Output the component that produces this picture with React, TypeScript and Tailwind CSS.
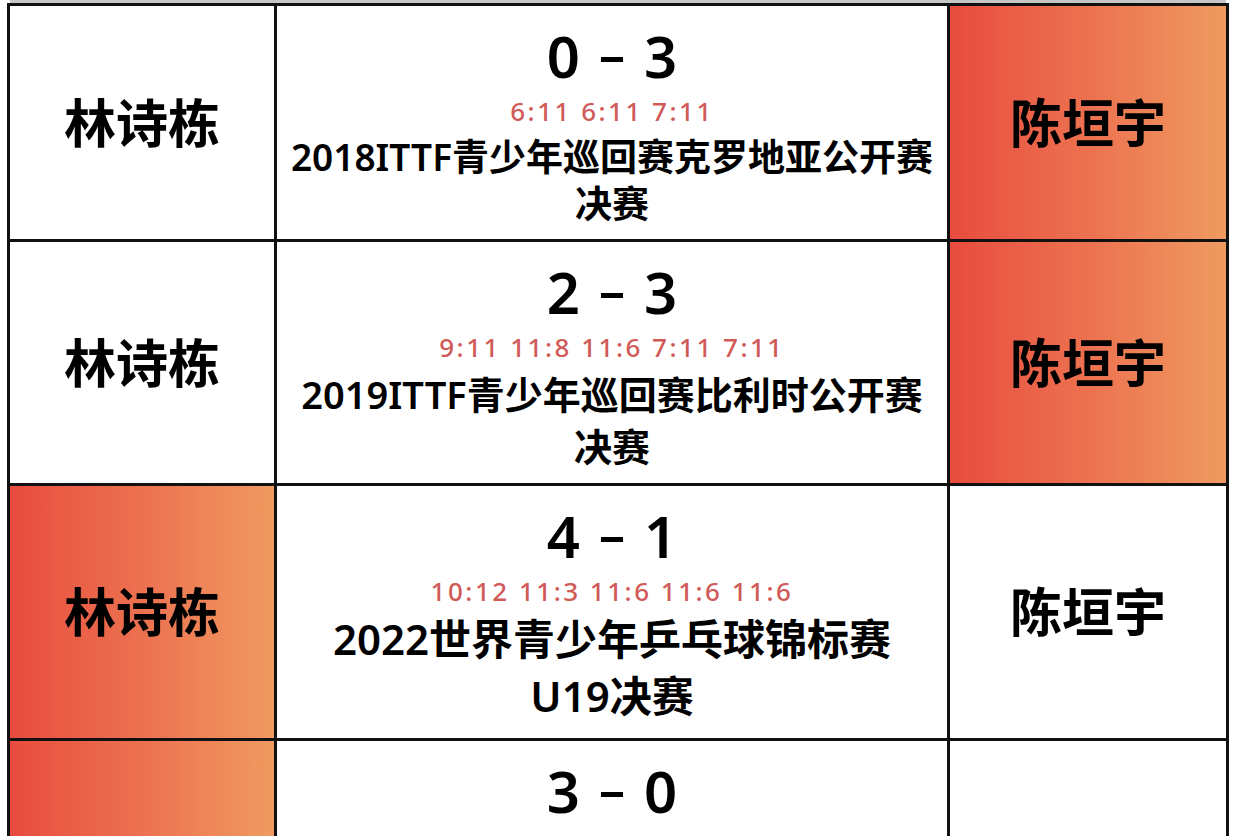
import React from "react";

type Match = {
    left: string;
    right: string;
    winner: "left" | "right";
    score: [number, number];
    games?: string;
    event?: string[];
    h: string;
    title: string;
};

// 标题字号和行高每行略有不同（按原图量的）
const matches: Match[] = [
    {
        left: "林诗栋",
        right: "陈垣宇",
        winner: "right",
        score: [0, 3],
        games: "6:11 6:11 7:11",
        event: ["2018ITTF青少年巡回赛克罗地亚公开赛", "决赛"],
        h: "h-[236px]",
        title: "mt-[5px] text-[37px] leading-[47px]",
    },
    {
        left: "林诗栋",
        right: "陈垣宇",
        winner: "right",
        score: [2, 3],
        games: "9:11 11:8 11:6 7:11 7:11",
        event: ["2019ITTF青少年巡回赛比利时公开赛", "决赛"],
        h: "h-[244px]",
        title: "mt-[4px] text-[38px] leading-[52px]",
    },
    {
        left: "林诗栋",
        right: "陈垣宇",
        winner: "left",
        score: [4, 1],
        games: "10:12 11:3 11:6 11:6 11:6",
        event: ["2022世界青少年乒乓球锦标赛", "U19决赛"],
        h: "h-[255px]",
        title: "mt-[2px] text-[42px] leading-[57px]",
    },
    {
        left: "林诗栋",
        right: "陈垣宇",
        winner: "left",
        score: [3, 0],
        h: "h-[310px]",
        title: "",
    },
];

const hot = "bg-linear-to-r from-[#e84b3e] via-[#ec7150] to-[#ef9a60]";

const NameCell = ({name, win}: { name: string; win: boolean }) => (
    <div
        className={`flex items-center justify-center border-r-[3px] border-b-[3px] border-[#111] text-[52px] font-bold text-black ${win ? hot : "bg-white"}`}>
        {name}
    </div>
);

export default function App() {
    return (
        <div
            className="h-[836px] w-full overflow-hidden bg-white font-['Noto_Sans','Noto_Sans_CJK_SC',sans-serif] text-black">
            <div className="ml-[7px] w-[1222px]">
                <div className="ml-[3px] mr-[3px] h-[3px] bg-[#c6c6c6]"/>
                <div className="border-l-[3px] border-t-[3px] border-[#111]">
                    {matches.map((m, i) => (
                        <div key={i} className={`grid grid-cols-[267px_673px_279px] ${m.h}`}>
                            <NameCell name={m.left} win={m.winner === "left"}/>
                            <div
                                className="flex flex-col items-center border-r-[3px] border-b-[3px] border-[#111] bg-white pt-[18px]">
                                <div className="flex items-start gap-[21px] text-[58px] font-semibold leading-[64px]">
                                    <span>{m.score[0]}</span>
                                    <span className="mt-[33px] h-[5px] w-[22px] bg-black"/>
                                    <span>{m.score[1]}</span>
                                </div>
                                {m.games && (
                                    <div
                                        className="mt-[6px] text-[26px] font-medium leading-[34px] tracking-[2.5px] text-[#d05a58]">
                                        {m.games}
                                    </div>
                                )}
                                {m.event && (
                                    <div className={`text-center font-semibold ${m.title}`}>
                                        {m.event.map((line, j) => (
                                            <div key={j}>{line}</div>
                                        ))}
                                    </div>
                                )}
                            </div>
                            <NameCell name={m.right} win={m.winner === "right"}/>
                        </div>
                    ))}
                </div>
            </div>
        </div>
    );
}
